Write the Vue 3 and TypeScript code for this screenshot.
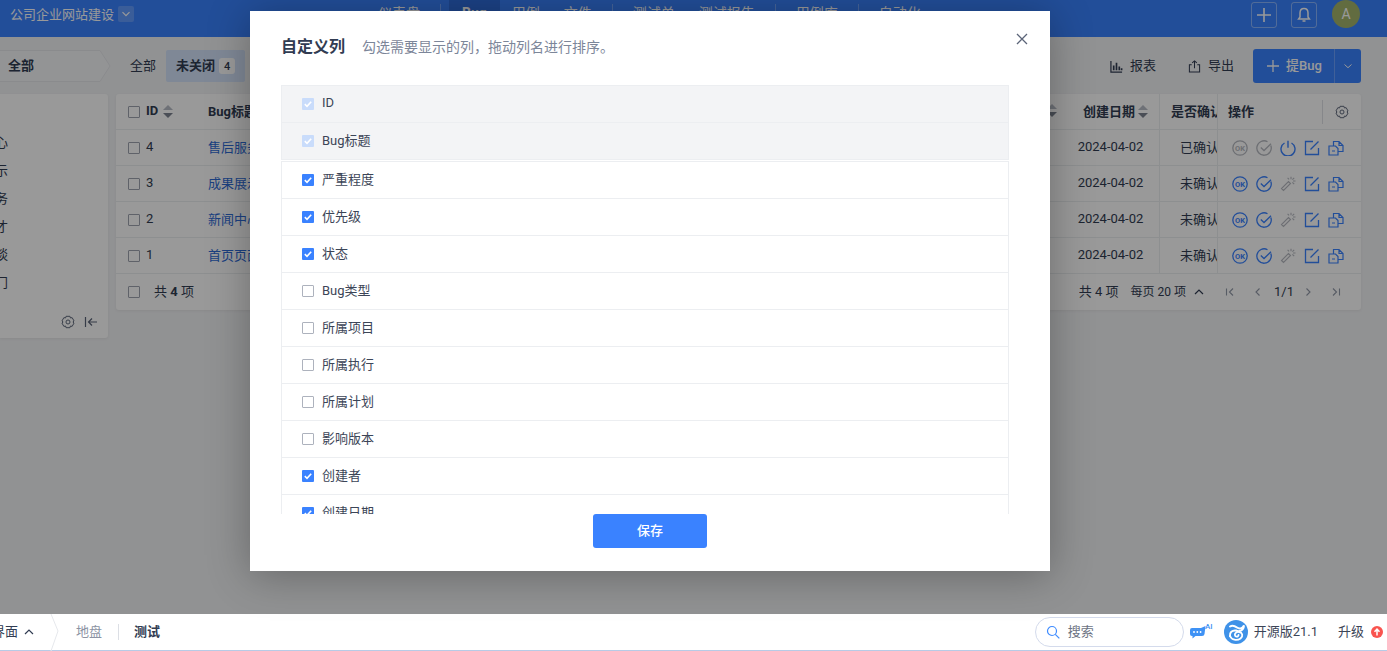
<script setup lang="ts">
const navItems = [
  { t: '仪表盘' }, { sep: true }, { t: 'Bug', active: true }, { t: '用例' }, { t: '文件' }, { sep: true },
  { t: '测试单' }, { t: '测试报告' }, { sep: true }, { t: '用例库' }, { sep: true }, { t: '自动化' },
]
const treeItems = ['售后服务中心', '成果展示', '公司业务', '招聘人才', '商务洽谈', '关于我们部门']
const rows = [
  { id: 4, title: '售后服务', confirm: '已确认', closed: true },
  { id: 3, title: '成果展示', confirm: '未确认', closed: false },
  { id: 2, title: '新闻中心', confirm: '未确认', closed: false },
  { id: 1, title: '首页页面', confirm: '未确认', closed: false },
]
const fixedCols = ['ID', 'Bug标题']
const cols = [
  { t: '严重程度', c: true }, { t: '优先级', c: true }, { t: '状态', c: true }, { t: 'Bug类型', c: false },
  { t: '所属项目', c: false }, { t: '所属执行', c: false }, { t: '所属计划', c: false }, { t: '影响版本', c: false },
  { t: '创建者', c: true }, { t: '创建日期', c: true }, { t: '解决者', c: false },
]
</script>

<template>
  <div class="app">
    <div class="main">
      <header class="header">
        <div class="proj">
          <span class="proj-name">公司企业网站建设</span>
          <span class="proj-caret"><svg width="10" height="10" viewBox="0 0 10 10"><path d="M1.5 3.2 5 6.7l3.5-3.5" fill="none" stroke="#fff" stroke-width="1.2" /></svg></span>
        </div>
        <nav class="nav">
          <template v-for="(n, i) in navItems" :key="i">
            <span v-if="n.sep" class="nav-sep"></span>
            <span v-else class="nav-item" :class="{ on: n.active }">{{ n.t }}</span>
          </template>
        </nav>
        <div class="head-right">
          <span class="head-btn"><svg width="16" height="16" viewBox="0 0 16 16"><path d="M8 1v14M1 8h14" stroke="#fff" stroke-width="1.6" /></svg></span>
          <span class="head-btn"><svg width="16" height="16" viewBox="0 0 16 16"><path d="M8 1.5c-2.8 0-4 2.2-4 4.5v4l-1.4 2h10.800L12 10V6c0-2.300-1.200-4.500-4-4.500ZM6.500 14h3" fill="none" stroke="#fff" stroke-width="1.500" /></svg></span>
          <span class="avatar">A</span>
        </div>
      </header>

      <div class="toolbar">
        <div class="crumb">
          <svg class="crumb-shape" width="111" height="32" viewBox="0 0 111 32"><path d="M-2 .5H100L110 16 100 31.500H-2Z" fill="#f6f7f9" stroke="#e6e8ec" /></svg>
          <span class="crumb-text">全部</span>
        </div>
        <span class="tab">全部</span>
        <span class="tab active">未关闭<b class="badge">4</b></span>
        <div class="spacer"></div>
        <span class="tool">
          <svg width="13" height="13" viewBox="0 0 14 14"><path d="M1 1v12h12" fill="none" stroke="#313c52" stroke-width="1.300" /><path d="M4 6v5M7 3v8M10 7v4M12.500 9v2" stroke="#313c52" stroke-width="1.800" /></svg><span class="lift">报表</span>
        </span>
        <span class="tool">
          <svg width="13" height="13" viewBox="0 0 14 14"><path d="M4 5H1.500v8h11V5H10M7 9V1M4.500 3.200 7 1l2.500 2.200" fill="none" stroke="#313c52" stroke-width="1.100" /></svg><span class="lift">导出</span>
        </span>
        <div class="add-btn">
          <span class="add-main"><svg width="14" height="14" viewBox="0 0 14 14"><path d="M7 1v12M1 7h12" stroke="#fff" stroke-width="1.300" /></svg><span class="lift">提Bug</span></span>
          <span class="add-caret"><svg width="10" height="10" viewBox="0 0 10 10"><path d="M1.500 3.500 5 6.700l3.500-3.200" fill="none" stroke="#fff" stroke-width="1" /></svg></span>
        </div>
      </div>

      <div class="content">
        <aside class="side">
          <ul class="tree">
            <li v-for="t in treeItems" :key="t">{{ t }}</li>
          </ul>
          <div class="side-foot">
            <svg width="14" height="14" viewBox="0 0 16 16"><use href="#i-gear" /></svg>
            <svg width="14" height="14" viewBox="0 0 14 14"><path d="M1.500 2v10M13 7H5M8 3.500 4.500 7 8 10.500" fill="none" stroke="#5b6478" stroke-width="1.200" /></svg>
          </div>
        </aside>

        <section class="table">
          <div class="tr th">
            <div class="c-id"><i class="cb"></i><span class="lift">ID</span><i class="sort"></i></div>
            <div class="c-title lifted"><span>Bug标题</span><i class="sort right"></i></div>
            <div class="c-date head"><span class="lift">创建日期</span><i class="sort"></i></div>
            <div class="c-conf head lifted">是否确认</div>
            <div class="c-act head"><span class="lift">操作</span><span class="gear-wrap"><svg width="14" height="14" viewBox="0 0 16 16"><use href="#i-gear" /></svg></span></div>
          </div>
          <div v-for="r in rows" :key="r.id" class="tr">
            <div class="c-id"><i class="cb"></i><span class="lift">{{ r.id }}</span></div>
            <div class="c-title link lifted">{{ r.title }}</div>
            <div class="c-date lifted">2024-04-02</div>
            <div class="c-conf lifted">{{ r.confirm }}</div>
            <div class="c-act icons">
              <svg class="ic" :class="r.closed ? 'gray' : 'blue'" viewBox="0 0 16 16"><circle cx="8" cy="8" r="7.200" fill="none" stroke="currentColor" stroke-width="1.300" /><text x="8" y="10.800" text-anchor="middle" class="ok">OK</text></svg>
              <svg class="ic" :class="r.closed ? 'gray' : 'blue'" viewBox="0 0 16 16"><path d="M14.800 5.500A7.200 7.200 0 1 1 11.500 1.700" fill="none" stroke="currentColor" stroke-width="1.300" /><path d="M4.800 7.500 8 10.500 15 3.800" fill="none" stroke="currentColor" stroke-width="1.300" /></svg>
              <svg v-if="r.closed" class="ic blue" viewBox="0 0 16 16"><path d="M4.500 3A7 7 0 1 0 11.500 3M8 .8v7" fill="none" stroke="currentColor" stroke-width="1.400" /></svg>
              <svg v-else class="ic gray" viewBox="0 0 16 16"><path d="M1.500 12.500 3.500 14.500 10.500 7.500 8.500 5.500ZM11 .8v2.500M15.500 5H13M14.200 1.800l-1.800 1.800M14.200 8.200l-1.800-1.800M7.600 1.800l1.500 1.500" fill="none" stroke="currentColor" stroke-width="1.100" /></svg>
              <svg class="ic blue" viewBox="0 0 16 16"><path d="M14.500 8v6.500h-13v-13H9M6.500 9.500 14.500 1.500" fill="none" stroke="currentColor" stroke-width="1.300" /></svg>
              <svg class="ic blue" viewBox="0 0 16 16"><path d="M1 6h6.500l2.500 2.500V15H1ZM5.500 6V1.500h5.500l4 4V11.500H10M11 1.500v4h4M4 11h3" fill="none" stroke="currentColor" stroke-width="1.200" /></svg>
            </div>
          </div>
          <div class="tr foot">
            <div class="foot-left"><i class="cb"></i><span class="lift">共 <b>4</b> 项</span></div>
            <div class="foot-right">
              <span class="lift">共 4 项</span>
              <span class="per"><span class="lift">每页 20 项</span><svg width="10" height="10" viewBox="0 0 10 10"><path d="M1 7 5 3l4 4" fill="none" stroke="#313c52" stroke-width="1.200" /></svg></span>
              <div class="pager">
                <svg width="10" height="10" viewBox="0 0 10 10"><path d="M1.500 1.500v7M8 1.500 4.500 5 8 8.500" fill="none" stroke="#9299a8" stroke-width="1.100" /></svg>
                <svg width="10" height="10" viewBox="0 0 10 10"><path d="M6.500 1.500 3 5l3.500 3.500" fill="none" stroke="#9299a8" stroke-width="1.100" /></svg>
                <span class="pg">1/1</span>
                <svg width="10" height="10" viewBox="0 0 10 10"><path d="M3.500 1.500 7 5 3.500 8.500" fill="none" stroke="#9299a8" stroke-width="1.100" /></svg>
                <svg width="10" height="10" viewBox="0 0 10 10"><path d="M8.500 1.500v7M2 1.500 5.500 5 2 8.500" fill="none" stroke="#9299a8" stroke-width="1.100" /></svg>
              </div>
            </div>
          </div>
        </section>
      </div>

      <div class="overlay"></div>

      <div class="dialog">
        <div class="dlg-head">
          <h2>自定义列</h2>
          <span class="dlg-sub">勾选需要显示的列，拖动列名进行排序。</span>
        </div>
        <button class="dlg-close" type="button" aria-label="关闭">
          <svg width="12" height="12" viewBox="0 0 12 12"><path d="M1 1l10 10M11 1 1 11" stroke="#5b6478" stroke-width="1.300" /></svg>
        </button>
        <div class="dlg-list">
          <div class="fixed-group">
            <div v-for="c in fixedCols" :key="c" class="col-row locked"><i class="check dis"><svg viewBox="0 0 12 12"><path d="M2.800 6.200 5 8.300l4.200-4.600" fill="none" stroke="#fff" stroke-width="1.600" /></svg></i><span class="lift">{{ c }}</span></div>
          </div>
          <div class="free-group">
            <div v-for="c in cols" :key="c.t" class="col-row">
              <i v-if="c.c" class="check"><svg viewBox="0 0 12 12"><path d="M2.800 6.200 5 8.300l4.200-4.600" fill="none" stroke="#fff" stroke-width="1.600" /></svg></i>
              <i v-else class="check off"></i><span class="lift">{{ c.t }}</span>
            </div>
          </div>
        </div>
        <div class="dlg-foot"><button class="save" type="button">保存</button></div>
      </div>
    </div>

    <footer class="taskbar">
      <span class="tb-group"><span class="lift">界面</span><svg width="10" height="10" viewBox="0 0 10 10"><path d="M1 7 5 3l4 4" fill="none" stroke="#313c52" stroke-width="1.200" /></svg></span>
      <svg class="tb-chev" width="10" height="37" viewBox="0 0 10 37"><path d="M1 0 8 17 1 37" fill="none" stroke="#e6e8ec" /></svg>
      <span class="tb-app lift">地盘</span>
      <span class="tb-sep"></span>
      <span class="tb-app cur lift">测试</span>
      <div class="spacer"></div>
      <div class="search">
        <svg width="14" height="14" viewBox="0 0 14 14"><circle cx="6" cy="6" r="4.500" fill="none" stroke="#3f8cff" stroke-width="1.200" /><path d="m9.300 9.300 4 4" stroke="#3f8cff" stroke-width="1.200" /></svg>
        <span class="lift">搜索</span>
      </div>
      <span class="ai">
        <svg width="24" height="18" viewBox="0 0 24 18"><path d="M1 7Q1 5 3 5H12L16.500 3 15.500 11Q15.300 13 13 13H6.500L3.500 15.500V13H3Q1 13 1 11Z" fill="#3f92f5" /><circle cx="5" cy="9" r=".9" fill="#fff" /><circle cx="8.300" cy="9" r=".9" fill="#fff" /><circle cx="11.600" cy="9" r=".9" fill="#fff" /><text x="16" y="6" class="ai-t">AI</text></svg>
      </span>
      <svg class="logo" width="24" height="24" viewBox="0 0 24 24"><circle cx="12" cy="12" r="12" fill="#3f92e8" /><g fill="none" stroke="#fff" stroke-linecap="round"><path d="M6 6.500C9 4.500 11 6 13 7.500S18 9 20 5.500C19.500 11 15 12 12 10.500 8 10 5.500 12.500 6 16" stroke-width="2" /><path d="M6 16C7.500 20 13 21 16.500 18.500 19.500 16 18.500 12.500 15 12 11.500 11.500 9.500 15 12 16.500 13.500 17 14.800 16 14.500 14.800" stroke-width="1.800" /></g></svg>
      <span class="ver lift">开源版21.1</span>
      <span class="up lift">升级</span>
      <svg class="up-dot" width="12" height="12" viewBox="0 0 12 12"><circle cx="6" cy="6" r="6" fill="#f9544f" /><path d="M6 9.500V3.500M3.500 5.800 6 3.200l2.500 2.600" fill="none" stroke="#fff" stroke-width="1.500" /></svg>
    </footer>

    <svg class="defs" width="0" height="0" aria-hidden="true">
      <symbol id="i-gear" viewBox="0 0 16 16">
        <path d="M5.800 1.500h4.400l.6 1.900 1.900-.4 2.200 3.800L13.600 8l1.300 1.200-2.200 3.800-1.900-.4-.6 1.900H5.800l-.6-1.900-1.900.4L1.100 9.200 2.400 8 1.100 6.800 3.300 3l1.900.4Z" fill="none" stroke="#5b6478" stroke-width="1.100" />
        <circle cx="8" cy="8" r="2.300" fill="none" stroke="#5b6478" stroke-width="1.100" />
      </symbol>
    </svg>
  </div>
</template>

<style>
html, body { margin: 0; padding: 0; background: #f0f1f3; overflow: hidden; }
</style>

<style scoped>
* { box-sizing: border-box; }
.app {
  width: 1387px; height: 651px; overflow: hidden; display: flex; flex-direction: column;
  font-family: Roboto, "Noto Sans CJK SC", sans-serif; font-size: 13px; color: #313c52; position: relative;
}
.main { height: 614px; position: relative; background: #f2f3f5; flex: none; }
.defs { position: absolute; }
.spacer { flex: 1; }
.lift { padding-bottom: 3px; }
.lifted { padding-bottom: 2px; }

.header { height: 37px; background: #3a82ff; color: #fff; display: flex; align-items: flex-start; position: relative; }
.proj { display: flex; align-items: center; padding: 6px 0 0 10px; width: 366px; }
.proj-name { font-size: 13px; line-height: 15px; }
.proj-caret { width: 16px; height: 16px; margin-left: 4px; border-radius: 2px; background: rgba(255,255,255,.2); display: flex; align-items: center; justify-content: center; }
.nav { display: flex; align-items: flex-start; height: 26px; font-size: 14px; line-height: 26px; }
.nav-item { padding: 0 12px; height: 26px; }
.nav-item.on { background: #2f6fe0; padding: 0 13px; font-weight: 700; }
.nav-sep { width: 1px; height: 20px; background: rgba(255,255,255,.3); margin: 4px 8px 0; }
.head-right { margin-left: auto; display: flex; align-items: center; padding: 0 27px 0 0; gap: 14px; }
.head-btn { width: 26px; height: 26px; margin-top: 1px; border: 1px solid rgba(255,255,255,.4); border-radius: 3px; display: flex; align-items: center; justify-content: center; }
.avatar { width: 28px; height: 28px; border-radius: 50%; background: #a4b46b; margin-left: 1px; display: flex; align-items: center; justify-content: center; font-size: 14px; }

.toolbar { height: 34px; margin-top: 12px; padding-right: 26px; display: flex; align-items: center; }
.crumb { width: 110px; height: 32px; position: relative; display: flex; align-items: center; padding: 0 0 3px 8px; font-weight: 700; }
.crumb-shape { position: absolute; left: 0; top: 0; }
.crumb-text { position: relative; }
.tab { height: 32px; display: flex; align-items: center; padding: 0 10px 3px; margin-left: 10px; }
.tab + .tab { margin-left: 0; }
.tab.active { background: #d4e3fb; border-radius: 2px; font-weight: 700; margin-left: 0; width: 79px; }
.badge { background: #fff; border-radius: 3px; width: 16px; height: 16px; margin: 3px 0 0 4px; display: inline-flex; align-items: center; justify-content: center; font-size: 11px; font-weight: 500; }
.tool { display: flex; align-items: center; gap: 7px; margin-right: 32px; font-size: 13px; }
.tool + .tool { margin-right: 19px; }
.add-btn { width: 108px; height: 34px; background: #3a82ff; border-radius: 3px; display: flex; color: #fff; font-weight: 500; }
.add-main { flex: 1; display: flex; align-items: center; justify-content: center; gap: 6px; padding-left: 1px; border-right: 1px solid rgba(255,255,255,.25); }
.add-caret { width: 26px; display: flex; align-items: center; justify-content: center; }

.content { display: flex; align-items: flex-start; gap: 8px; padding: 11px 26px 0 0; }
.side { width: 108px; height: 244px; background: #fff; border-radius: 0 3px 3px 0; box-shadow: 0 1px 3px rgba(0,0,0,.06); display: flex; flex-direction: column; position: relative; flex: none; }
.tree { list-style: none; margin: 35px 100px 0 0; padding: 0; flex: 1; }
.tree li { height: 28px; line-height: 28px; white-space: nowrap; display: flex; justify-content: flex-end; }
.side-foot { position: absolute; right: 10px; bottom: 9px; display: flex; gap: 9px; align-items: center; }

.table { flex: 1; background: #fff; border-radius: 3px; box-shadow: 0 1px 3px rgba(0,0,0,.06); min-width: 0; }
.tr { display: grid; grid-template-columns: 92px 1fr 98px 57px 144px; height: 36px; align-items: stretch; border-bottom: 1px solid #eceef1; }
.tr > div { display: flex; align-items: center; min-width: 0; overflow: hidden; white-space: nowrap; }
.th { font-weight: 700; }
.c-id { padding-left: 12px; gap: 6px; }
.cb { width: 12px; height: 12px; border: 1px solid #9ea3b0; border-radius: 1px; display: inline-block; flex: none; background: #fff; }
.sort { width: 10px; height: 13px; margin-left: -1px; flex: none; position: relative; display: inline-block; }
.sort::before, .sort::after { content: ""; position: absolute; left: 0; border-left: 5px solid transparent; border-right: 5px solid transparent; }
.sort::before { top: 0; border-bottom: 5px solid #b8bcc6; }
.sort::after { bottom: 0; border-top: 5px solid #7c8290; }
.sort.right { margin-left: auto; margin-right: 5px; }
.link { color: #2e6bd6; }
.c-date { justify-content: center; border-right: 1px solid #eceef1; }
.c-date.head { gap: 4px; padding-left: 10px; }
.c-conf { padding-left: 20px; }
.c-conf.head { padding-left: 11px; }
.c-act { border-left: 1px solid #eceef1; padding-left: 10px; }
.gear-wrap { margin-left: auto; margin-right: 12px; padding-left: 12px; border-left: 1px solid #dfe1e6; height: 24px; display: flex; align-items: center; }
.icons { gap: 8px; padding-left: 14px; }
.ic { width: 16px; height: 16px; flex: none; }
.blue { color: #3a82ff; }
.gray { color: #b6b9c0; }
.ok { font: 700 7.500px Roboto, sans-serif; fill: currentColor; }
.tr.foot { display: flex; border-bottom: 0; justify-content: space-between; }
.foot-left { padding-left: 12px; gap: 14px; }
.foot-right { gap: 12px; padding-right: 20px; }
.per { display: flex; align-items: center; gap: 8px; font-size: 12px; }
.pager { display: flex; align-items: center; gap: 18px; margin-left: 9px; }
.pg { margin: 0 -9px 0 -7px; padding-bottom: 1px; }

.overlay { position: absolute; inset: 0; background: rgba(0,0,0,.4); }

.dialog { position: absolute; left: 250px; top: 11px; width: 800px; height: 560px; background: #fff; box-shadow: 0 4px 40px rgba(0,0,0,.3); display: flex; flex-direction: column; padding: 0 41px 0 31px; }
.dlg-head { height: 74px; display: flex; align-items: flex-start; gap: 17px; padding-top: 24px; flex: none; }
.dlg-head h2 { margin: 0; font-size: 16px; line-height: 24px; font-weight: 700; color: #313c52; }
.dlg-sub { font-size: 14px; line-height: 24px; color: #7c8699; }
.dlg-close { position: absolute; right: 22px; top: 22px; width: 12px; height: 12px; padding: 0; border: 0; background: none; display: flex; }
.dlg-list { height: 429px; overflow: hidden; flex: none; }
.fixed-group { background: #f3f4f6; border: 1px solid #eceef1; }
.free-group { margin-top: 1px; border: 1px solid #eceef1; }
.col-row { height: 37px; display: flex; align-items: center; padding-left: 20px; gap: 8px; color: #3c4557; font-size: 13px; border-bottom: 1px solid #eceef1; }
.fixed-group .col-row:last-child { border-bottom: 0; height: 36px; }
.check { width: 12px; height: 12px; background: #3a82ff; display: inline-flex; flex: none; border-radius: 1px; }
.check svg { width: 12px; height: 12px; }
.check.dis { background: #c9dcfb; }
.check.off { background: #fff; border: 1px solid #adb2bd; }
.dlg-foot { display: flex; justify-content: center; flex: none; margin-left: 10px; }
.save { width: 114px; height: 34px; background: #3a82ff; color: #fff; border: 0; border-radius: 3px; padding: 0 0 3px; font: 500 13px Roboto, "Noto Sans CJK SC", sans-serif; }

.taskbar { height: 37px; background: #fff; border-bottom: 1px solid #b7cbe6; display: flex; align-items: center; flex: none; white-space: nowrap; }
.tb-group { display: flex; align-items: center; gap: 6px; margin-left: -8px; width: 58px; }
.tb-chev { flex: none; }
.tb-app { color: #8c93a3; margin-left: 16px; }
.tb-sep { width: 1px; height: 16px; background: #dcdfe5; margin-left: 16px; }
.tb-app.cur { color: #313c52; font-weight: 700; margin-left: 15px; }
.search { width: 149px; height: 30px; border: 1px solid #d4dbec; border-radius: 15px; display: flex; align-items: center; padding-left: 10px; gap: 8px; color: #6d7484; }
.ai { margin-left: 5px; display: flex; width: 25px; }
.ai-t { font: 500 8px Roboto, sans-serif; fill: #3f92f5; }
.logo { margin-left: 10px; flex: none; }
.ver { margin-left: 6px; color: #3c4557; }
.up { margin-left: 20px; color: #3c4557; }
.up-dot { margin: 0 4px 0 7px; flex: none; }
</style>
